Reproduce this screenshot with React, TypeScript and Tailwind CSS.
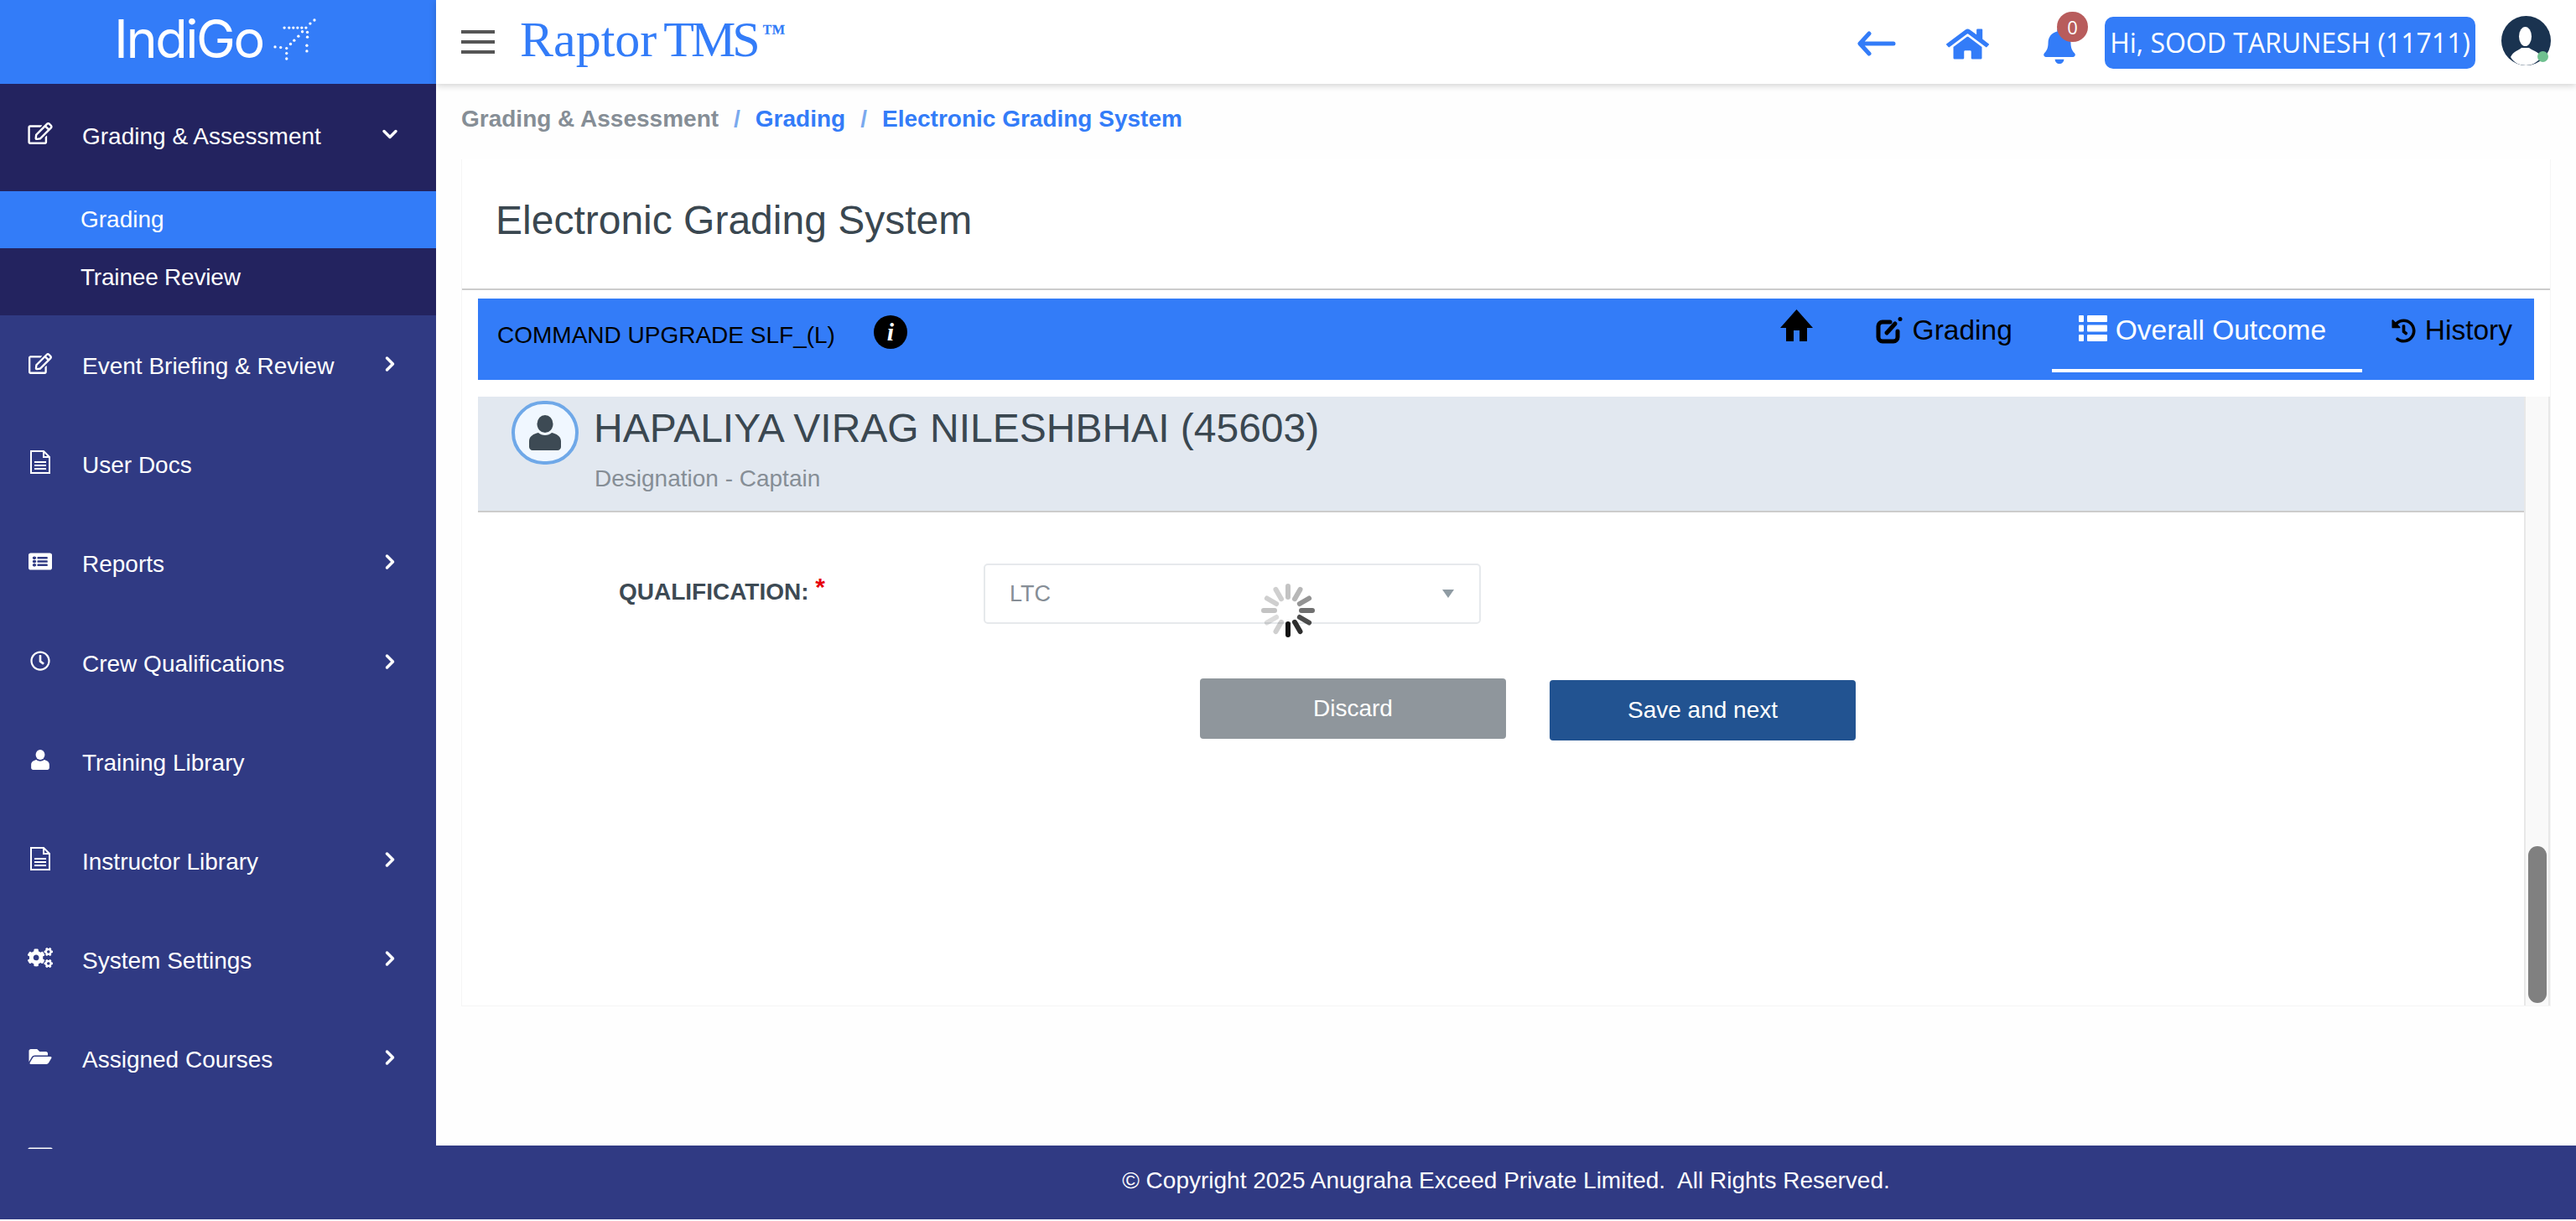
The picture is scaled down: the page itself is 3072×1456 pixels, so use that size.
import { ChevronDown, ChevronRight } from "lucide-react";
import type { ComponentType } from "react";
import {
  FaBell,
  FaCogs,
  FaFolderOpen,
  FaHistory,
  FaHome,
  FaListAlt,
  FaRegClock,
  FaRegEdit,
} from "react-icons/fa";

const sans = "font-['Liberation_Sans',Arial,sans-serif]";

type IconProps = { className?: string };

const GlyphUser = ({ className }: IconProps) => (
  <svg viewBox="0 0 38 42" className={className} fill="currentColor">
    <ellipse cx="19" cy="10.5" rx="9.5" ry="10.5" />
    <path d="M0 31c0-6 6-9 11-10 2 2 5 3 8 3s6-1 8-3c5 1 11 4 11 10v7c0 2-2 4-4 4H4c-2 0-4-2-4-4z" />
  </svg>
);

const FileIcon = ({ className }: IconProps) => (
  <svg viewBox="0 0 24 28" className={className} fill="none" stroke="currentColor" strokeWidth="2">
    <path d="M1 1h15l7 7v19H1z" />
    <path d="M16 1v7h7M5 14h14M5 18h14M5 22h14" />
  </svg>
);

const ListIcon = ({ className }: IconProps) => (
  <FaListAlt className={className} preserveAspectRatio="none" />
);

interface NavItem {
  label: string;
  icon: ComponentType<IconProps>;
  iconClass: string;
  arrow?: boolean;
}

const navItems: NavItem[] = [
  { label: "Event Briefing & Review", icon: FaRegEdit, iconClass: "w-[28px] h-[25px]", arrow: true },
  { label: "User Docs", icon: FileIcon, iconClass: "w-[24px] h-[28px]" },
  { label: "Reports", icon: ListIcon, iconClass: "w-[28px] h-[23px]", arrow: true },
  { label: "Crew Qualifications", icon: FaRegClock, iconClass: "w-[24px] h-[24px]", arrow: true },
  { label: "Training Library", icon: GlyphUser, iconClass: "w-[22px] h-[24px]" },
  { label: "Instructor Library", icon: FileIcon, iconClass: "w-[24px] h-[28px]", arrow: true },
  { label: "System Settings", icon: FaCogs, iconClass: "w-[31px] h-[26px]", arrow: true },
  { label: "Assigned Courses", icon: FaFolderOpen, iconClass: "w-[30px] h-[24px]", arrow: true },
  { label: "", icon: ListIcon, iconClass: "w-[30px] h-[24px]" },
];

const planeDots = [
  [775, 35], [760, 47], [745, 62], [732, 76], [718, 92], [703, 107], [690, 120], [676, 135],
  [676, 153], [676, 172], [668, 62], [685, 62], [700, 62], [715, 62], [730, 62], [750, 78],
  [750, 95], [748, 125], [748, 145], [635, 130], [655, 132],
];

const PlaneDots = () => (
  <svg width="57" height="57" viewBox="620 20 170 170" className="ml-[9px] mt-[-6px]">
    {planeDots.map(([x, y]) => (
      <circle key={`${x}-${y}`} cx={x} cy={y} r="5" fill="#fff" />
    ))}
  </svg>
);

// opacity per clock position, 12 first
const spokeOpacity = [0.25, 0.3, 0.45, 0.6, 0.75, 0.88, 1, 0.2, 0.15, 0.25, 0.2, 0.2];

const Spinner = () => (
  <svg width="66" height="66" viewBox="-33 -33 66 66" className="blur-[0.4px]">
    {spokeOpacity.map((opacity, i) => (
      <rect
        key={i}
        x="-3"
        y="-32"
        width="6"
        height="19"
        rx="3"
        fill="#111"
        opacity={opacity}
        transform={`rotate(${i * 30})`}
      />
    ))}
  </svg>
);

const Sidebar = () => (
  <aside className={`w-[520px] shrink-0 flex flex-col bg-[#303a83] text-white ${sans}`}>
    <div className="h-[100px] bg-[#337cf8] flex items-center pl-[136px]">
      <span className="font-['Inter',sans-serif] font-normal text-[63px] tracking-[-2.5px] leading-none -mt-[8px]">
        IndiGo
      </span>
      <PlaneDots />
    </div>
    <div className="bg-[#23235f] h-[276px] flex flex-col">
      <div className="h-[128px] flex items-start pt-[46px] pl-[33px] pr-[41px]">
        <span className="w-[30px] h-[28px] -mt-[1px] flex items-center justify-center">
          <FaRegEdit className="w-[30px] h-[26px]" />
        </span>
        <span className="ml-[35px] text-[28px] leading-[34px] flex-1">Grading &amp; Assessment</span>
        <ChevronDown className="w-[28px] h-[28px]" strokeWidth={3} />
      </div>
      <div className="h-[68px] bg-[#337cf8] flex items-center pl-[96px] text-[28px]">Grading</div>
      <div className="h-[70px] flex items-center pl-[96px] text-[28px] tracking-[-0.2px]">Trainee Review</div>
    </div>
    <div className="h-[994px] overflow-hidden">
      {navItems.map((item, i) => {
        const Icon = item.icon;
        return (
          <div key={i} className="h-[118.2px] pt-[44px] pl-[33px] pr-[41px] flex items-start">
            <span className="w-[30px] h-[28px] -mt-[1px] flex items-center justify-center">
              <Icon className={item.iconClass} />
            </span>
            <span className="ml-[35px] text-[28px] leading-[34px] flex-1">{item.label}</span>
            {item.arrow && <ChevronRight className="w-[28px] h-[28px]" strokeWidth={3} />}
          </div>
        );
      })}
    </div>
    <div className="flex-1" />
  </aside>
);

const TopBar = () => (
  <header className="h-[100px] bg-white shadow-[0_2px_8px_rgba(0,0,0,0.18)] flex items-center px-[30px] relative z-10">
    <div className="flex flex-col gap-[8px] w-[40px]">
      <span className="h-[4px] bg-[#555]" />
      <span className="h-[4px] bg-[#555]" />
      <span className="h-[4px] bg-[#555]" />
    </div>
    <div className="ml-[30px] font-['Liberation_Serif',serif] text-[#337cf8] text-[60px] leading-none [word-spacing:-7px] flex items-start -mt-[6px] whitespace-pre">
      <span>
        Raptor <span className="tracking-[-4px]">TMS</span>
      </span>
      <span className="text-[28px] leading-[44px] font-bold ml-[6px]">™</span>
    </div>
    <div className="ml-auto flex items-center">
      <svg
        width="46"
        height="30"
        viewBox="0 0 46 30"
        className="mt-[4px] text-[#337cf8]"
        fill="none"
        stroke="currentColor"
        strokeWidth="5"
        strokeLinecap="round"
        strokeLinejoin="round"
      >
        <path d="M43 15H4M14 3L3 15l11 12" />
      </svg>
      <FaHome className="w-[51px] h-[41px] text-[#337cf8] ml-[60px] mt-[4px]" preserveAspectRatio="none" />
      <div className="relative ml-[65px] mr-[35px] mt-[8px]">
        <FaBell className="w-[38px] h-[43px] text-[#337cf8]" />
        <span className="absolute -top-[19px] left-[16px] w-[37px] h-[36px] rounded-full bg-[#b85c5c] text-white text-[22px] leading-[36px] text-center font-['Open_Sans',sans-serif]">
          0
        </span>
      </div>
      <div className="h-[62px] w-[442px] mt-[2px] rounded-[10px] bg-[#337cf8] text-white font-['Open_Sans',sans-serif] text-[32px] flex items-center justify-center whitespace-nowrap">
        Hi, SOOD TARUNESH (11711)
      </div>
      <div className="relative ml-[31px] -mt-[3px] w-[59px] h-[59px] rounded-full bg-[#1a3350]">
        <svg viewBox="0 0 59 59" className="w-full h-full rounded-full">
          <ellipse cx="28.5" cy="24.5" rx="7.5" ry="11.5" fill="#fff" />
          <path d="M11 49C14 42 21 41 24 38L33 38C36 41 44 42 48 49C42 56 36 59 29 59C22 59 15 56 11 49Z" fill="#fff" />
        </svg>
        <span className="absolute left-[43px] top-[42px] w-[13px] h-[13px] rounded-full bg-[#6fc08f]" />
      </div>
    </div>
  </header>
);

const TabBar = () => (
  <div className="h-[97px] bg-[#337cf8] flex items-start pl-[23px] pr-[26px] text-black">
    <span className="text-[28px] leading-[32px] mt-[28px]">COMMAND UPGRADE SLF_(L)</span>
    <span className="w-[40px] h-[40px] ml-[46px] mt-[20px] rounded-full bg-black text-white font-['Liberation_Serif',serif] italic font-bold text-[30px] leading-[40px] text-center">
      i
    </span>
    <div className="ml-auto flex items-start">
      <svg width="39" height="38" viewBox="0 0 39 38" className="mt-[13px] mr-[75px]" fill="#000">
        <path d="M19.5 0L39 22H32V38H23V25H16V38H7V22H0Z" />
      </svg>
      <div className="flex items-center gap-[12px] mt-[19px] mr-[47px] text-[33.5px] leading-[38px]">
        <svg width="32" height="32" viewBox="0 0 32 32" fill="none" stroke="#000" strokeWidth="5" strokeLinecap="round">
          <path d="M17 6H8a5 5 0 0 0-5 5v13a5 5 0 0 0 5 5h13a5 5 0 0 0 5-5v-7" />
          <path d="M13 19L23 8" />
          <path d="M29 2.5v.1" />
        </svg>
        Grading
      </div>
      <div className="h-[88px] w-[370px] border-b-[4px] border-white text-white flex items-start pl-[32px] gap-[10px] pt-[19px] text-[33.5px] leading-[38px] mr-[35px]">
        <svg width="34" height="31" viewBox="0 0 34 31" fill="#fff" className="mt-[1px] shrink-0">
          <rect x="0" y="0" width="6" height="8" rx="1" />
          <rect x="10" y="0" width="24" height="8" rx="1" />
          <rect x="0" y="11.5" width="6" height="8" rx="1" />
          <rect x="10" y="11.5" width="24" height="8" rx="1" />
          <rect x="0" y="23" width="6" height="8" rx="1" />
          <rect x="10" y="23" width="24" height="8" rx="1" />
        </svg>
        Overall Outcome
      </div>
      <div className="flex items-center gap-[11px] mt-[19px] text-[33.5px] leading-[38px]">
        <FaHistory className="w-[29px] h-[29px]" />
        History
      </div>
    </div>
  </div>
);

const Content = () => (
  <div className="flex-1 bg-[#fefefe] px-[30px]">
    <div className={`pt-[27px] h-[90px] text-[28px] font-bold leading-[30px] flex gap-[18px] ${sans}`}>
      <span className="text-[#868e96]">Grading &amp; Assessment</span>
      <span className="text-[#7aa9ee]">/</span>
      <span className="text-[#337cf8]">Grading</span>
      <span className="text-[#7aa9ee]">/</span>
      <span className="text-[#337cf8]">Electronic Grading System</span>
    </div>
    <div className={`w-[2492px] h-[1010px] bg-white border-x border-b border-[#f5f5f5] flex flex-col ${sans}`}>
      <div className="h-[156px] border-b-[2px] border-[#cccccc] pl-[40px] pb-[8px] flex items-center text-[48px] text-[#3a4750]">
        Electronic Grading System
      </div>
      <div className="ml-[19px] mr-[19px] mt-[10px]">
        <TabBar />
      </div>
      <div className="flex flex-1 ml-[19px] mt-[20px]">
        <div className="flex-1">
          <div className="h-[138px] bg-[#e2e8f0] border-b-[2px] border-[#cccccc] flex pl-[40px]">
            <div className="w-[80px] h-[76px] mt-[5px] rounded-full border-[4px] border-[#6fa8e8] bg-[#f0f7ff] flex items-center justify-center">
              <GlyphUser className="w-[38px] h-[42px] text-[#3d4a54]" />
            </div>
            <div className="ml-[18px]">
              <div className="text-[48px] leading-[54px] mt-[11px] text-[#3a4750] whitespace-nowrap">
                HAPALIYA VIRAG NILESHBHAI (45603)
              </div>
              <div className="text-[28px] leading-[32px] mt-[17px] pl-[1px] text-[#868e96]">Designation - Captain</div>
            </div>
          </div>
          <div className="flex mt-[61px] pl-[168px]">
            <div className="w-[435px] font-bold text-[28px] leading-[32px] mt-[17px] text-[#3d4a54]">
              QUALIFICATION: <span className="inline-block -translate-y-[5px] text-[30px] text-red-600">*</span>
            </div>
            <div className="relative w-[593px] h-[72px] border-2 border-[#e6e9ec] rounded-[5px] flex items-center justify-between pl-[29px] pr-[30px] text-[27px] text-[#868e96]">
              LTC
              <span className="w-0 h-0 border-x-[7px] border-x-transparent border-t-[10px] border-t-[#8f9ba3]" />
              <div className="absolute left-[328px] top-[21px]">
                <Spinner />
              </div>
            </div>
          </div>
          <div className="flex items-start mt-[65px] pl-[861px] gap-[52px] text-white text-[28px]">
            <button className="w-[365px] h-[72px] rounded-[4px] bg-[#8f969c]">Discard</button>
            <button className="w-[365px] h-[72px] mt-[2px] rounded-[4px] bg-[#225391]">Save and next</button>
          </div>
        </div>
        <div className="w-[31px] border-x-2 border-[#e8e8e8] bg-[#f9f9f9] flex flex-col justify-end items-center pb-[3px]">
          <div className="w-[22px] h-[187px] rounded-full bg-[#808080]" />
        </div>
      </div>
    </div>
  </div>
);

const Footer = () => (
  <footer className={`h-[88px] pb-[4px] bg-[#303a83] text-white text-[28px] flex items-center justify-center whitespace-pre ${sans}`}>
    © Copyright 2025 Anugraha Exceed Private Limited.  All Rights Reserved.
  </footer>
);

export default function App() {
  return (
    <div className="flex w-[3072px] h-[1454px] overflow-hidden bg-white">
      <Sidebar />
      <div className="flex-1 flex flex-col min-w-0">
        <TopBar />
        <Content />
        <Footer />
      </div>
    </div>
  );
}
